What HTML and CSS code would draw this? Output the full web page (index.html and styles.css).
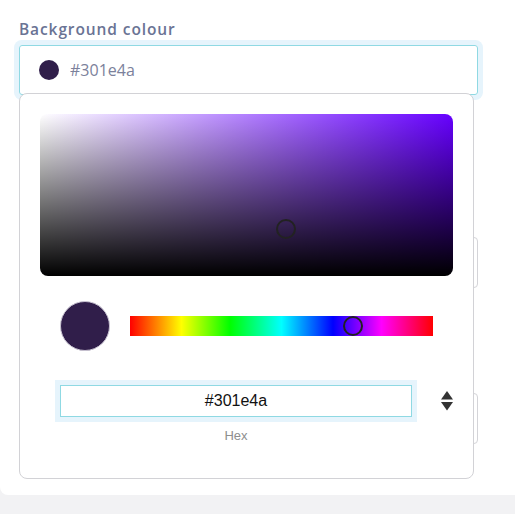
FILE: index.html
```html
<!doctype html>
<html lang="en">
    <head>
        <meta charset="UTF-8" />
        <meta name="viewport" content="width=device-width, initial-scale=1.0" />
        <title>Background colour</title>
        <link rel="stylesheet" href="styles.css">
    </head>
    <body>
        <div class="card">
            <div class="field field-colour">
                <label class="field-label" for="bg">Background colour</label>
                <div class="colour-input">
                    <span class="colour-dot"></span>
                    <input id="bg" type="text" value="#301e4a" />
                </div>

                <div class="picker">
                    <div class="saturation">
                        <span class="sat-pointer"></span>
                    </div>
                    <div class="picker-row">
                        <span class="swatch"></span>
                        <div class="hue">
                            <span class="hue-pointer"></span>
                        </div>
                    </div>
                    <div class="hex-row">
                        <div class="hex-field">
                            <input class="hex-input" type="text" value="#301e4a" />
                            <span class="hex-label">Hex</span>
                        </div>
                        <button class="mode-toggle" type="button">
                            <svg width="12" height="20" viewBox="0 0 12 20">
                                <path d="M6 0 L12 8.5 L0 8.5 Z" fill="#333" />
                                <path d="M0 11 L12 11 L6 19.5 Z" fill="#333" />
                            </svg>
                        </button>
                    </div>
                </div>
            </div>

            <div class="field field-second">
                <input class="plain-input" type="text" />
            </div>
            <div class="field field-third">
                <input class="plain-input" type="text" />
            </div>
        </div>
    </body>
</html>
```

FILE: styles.css
```css
body {
    margin: 0;
    background: #f2f2f4;
    font-family: "Open Sans", sans-serif;
}
.card {
    background: white;
    border-radius: 0 0 0 8px;
    padding: 19px 37px 51px 19px;
}
.field {
    position: relative;
}
.field-label {
    display: block;
    font-size: 15.5px;
    line-height: 21px;
    font-weight: 600;
    letter-spacing: 0.9px;
    color: #6a7394;
    margin-bottom: 5px;
}
.colour-input {
    display: flex;
    align-items: center;
    height: 50px;
    box-sizing: border-box;
    padding-left: 19px;
    border: 1px solid #8fd9e3;
    border-radius: 3px;
    box-shadow: 0 0 0 5px #e6f4fc;
}
.colour-dot {
    width: 20px;
    height: 20px;
    border-radius: 50%;
    background: #301e4a;
    margin-right: 11px;
}
.colour-input input {
    border: none;
    outline: none;
    font-family: "Open Sans", sans-serif;
    font-size: 16px;
    color: #7b819b;
    padding: 0;
    width: 200px;
}
.plain-input {
    display: block;
    width: 100%;
    height: 51px;
    box-sizing: border-box;
    border: 1px solid #d4d4d8;
    border-radius: 4px;
}
.field-second {
    margin-top: 142px;
}
.field-third {
    margin-top: 105px;
}

/* colour picker popup */
.picker {
    position: absolute;
    left: 0;
    top: 74px;
    z-index: 2;
    width: 455px;
    box-sizing: border-box;
    padding: 20px 20px 33px;
    background: white;
    border: 1px solid #d2d2d6;
    border-radius: 8px;
}
.saturation {
    position: relative;
    height: 162px;
    border-radius: 8px;
    background:
        linear-gradient(to top, #000, rgba(0, 0, 0, 0)),
        linear-gradient(to right, #fff, hsl(264, 100%, 50%));
}
.sat-pointer {
    position: absolute;
    left: 59.5%;
    top: 71%;
    width: 16px;
    height: 16px;
    margin: -10px 0 0 -10px;
    border: 2px solid #222;
    border-radius: 50%;
}
.picker-row {
    display: flex;
    align-items: center;
    gap: 20px;
    padding: 0 20px;
    margin-top: 25px;
    height: 50px;
}
.swatch {
    flex: none;
    width: 50px;
    height: 50px;
    box-sizing: border-box;
    border-radius: 50%;
    background: #301e4a;
    border: 1px solid #c9c4d2;
}
.hue {
    position: relative;
    flex: 1;
    height: 20px;
    background: linear-gradient(
        to right,
        #f00 0%,
        #ff0 17%,
        #0f0 33%,
        #0ff 50%,
        #00f 67%,
        #f0f 83%,
        #f00 100%
    );
}
.hue-pointer {
    position: absolute;
    left: 73.5%;
    top: 50%;
    width: 16px;
    height: 16px;
    margin: -10px 0 0 -10px;
    border: 2px solid #222;
    border-radius: 50%;
}
.hex-row {
    display: flex;
    align-items: flex-start;
    padding-left: 20px;
    margin-top: 34px;
}
.hex-field {
    display: flex;
    flex-direction: column;
    align-items: center;
    width: 353px;
}
.hex-input {
    width: 100%;
    height: 32px;
    box-sizing: border-box;
    border: 1px solid #8fd9e3;
    box-shadow: 0 0 0 5px #e6f4fc;
    outline: none;
    text-align: center;
    font-family: "Liberation Sans", Arial, sans-serif;
    font-size: 16px;
    color: #111;
}
.hex-label {
    margin-top: 10px;
    font-family: "Liberation Sans", Arial, sans-serif;
    font-size: 13px;
    line-height: 18px;
    color: #8e8e8e;
}
.mode-toggle {
    margin: 6px 0 0 29px;
    padding: 0;
    border: none;
    background: none;
    display: flex;
}
```
